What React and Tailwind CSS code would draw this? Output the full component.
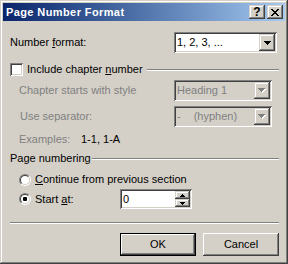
import React from "react";

const FRAME =
  "shadow-[inset_-1px_-1px_0_#404040,inset_1px_1px_0_#D4D0C8,inset_-2px_-2px_0_#808080,inset_2px_2px_0_#FFFFFF]";
const BUTTON =
  "shadow-[inset_-1px_-1px_0_#404040,inset_1px_1px_0_#FFFFFF,inset_-2px_-2px_0_#808080]";
const SUNKEN =
  "shadow-[inset_1px_1px_0_#808080,inset_-1px_-1px_0_#FFFFFF,inset_2px_2px_0_#404040,inset_-2px_-2px_0_#D4D0C8]";

function DownArrow({ disabled }) {
  if (disabled) {
    return (
      <svg width="8" height="5" viewBox="0 0 8 5" shapeRendering="crispEdges">
        <path d="M1 1h7v1H1zM2 2h5v1H2zM3 3h3v1H3zM4 4h1v1H4z" fill="#FFFFFF" />
        <path d="M0 0h7v1H0zM1 1h5v1H1zM2 2h3v1H2zM3 3h1v1H3z" fill="#808080" />
      </svg>
    );
  }
  return (
    <svg width="7" height="4" viewBox="0 0 7 4" shapeRendering="crispEdges">
      <path d="M0 0h7v1H0zM1 1h5v1H1zM2 2h3v1H2zM3 3h1v1H3z" fill="#000000" />
    </svg>
  );
}

function Combo({ className, disabled, children }) {
  return (
    <div
      className={`${className} h-[21px] p-[2px] flex ${SUNKEN} ${
        disabled ? "bg-[#D4D0C8] text-[#808080]" : "bg-white text-black"
      }`}
    >
      <div className="flex-1 flex items-center pl-[1px] whitespace-nowrap">{children}</div>
      <div className={`w-[16px] h-[17px] bg-[#D4D0C8] flex items-center justify-center ${FRAME}`}>
        <DownArrow disabled={disabled} />
      </div>
    </div>
  );
}

function Line({ className = "" }) {
  return <div className={`h-[2px] border-t border-t-[#808080] border-b border-b-white ${className}`} />;
}

function Radio({ checked }) {
  return (
    <div className="w-[12px] h-[12px] shrink-0 rounded-full border border-t-[#808080] border-l-[#808080] border-r-white border-b-white">
      <div className="w-full h-full rounded-full border border-t-[#404040] border-l-[#404040] border-r-[#D4D0C8] border-b-[#D4D0C8] bg-white flex items-center justify-center">
        {checked && <div className="w-[4px] h-[4px] rounded-[1px] bg-black" />}
      </div>
    </div>
  );
}

function PushButton({ isDefault, children }) {
  if (isDefault) {
    return (
      <div className="w-[76px] h-[23px] border border-black">
        <div className={`w-full h-full bg-[#D4D0C8] flex items-center justify-center ${BUTTON}`}>{children}</div>
      </div>
    );
  }
  return (
    <div className={`w-[76px] h-[23px] bg-[#D4D0C8] flex items-center justify-center ${BUTTON}`}>{children}</div>
  );
}

export default function App() {
  return (
    <div
      className={`w-[288px] h-[264px] bg-[#D4D0C8] p-[3px] flex flex-col font-['Liberation_Sans',Arial,sans-serif] text-[11px] leading-[13px] text-black select-none ${FRAME}`}
    >
      {/* Title bar */}
      <div className="h-[18px] shrink-0 flex items-center bg-linear-to-r from-[#0A246A] to-[#A6CAF0] pl-[3px] pr-[2px]">
        <span className="flex-1 font-bold text-white whitespace-nowrap tracking-[0.4px]">Page Number Format</span>
        <div className={`w-[16px] h-[14px] bg-[#D4D0C8] flex items-center justify-center ${FRAME}`}>
          <span className="font-bold text-[12px] leading-[12px] text-black">?</span>
        </div>
        <div className={`ml-[2px] w-[16px] h-[14px] bg-[#D4D0C8] flex items-center justify-center ${FRAME}`}>
          <svg width="8" height="7" viewBox="0 0 8 7" shapeRendering="crispEdges">
            <path
              d="M0 0h2v1H0zM6 0h2v1H6zM1 1h2v1H1zM5 1h2v1H5zM2 2h4v1H2zM3 3h2v1H3zM2 4h4v1H2zM1 5h2v1H1zM5 5h2v1H5zM0 6h2v1H0zM6 6h2v1H6z"
              fill="#000000"
            />
          </svg>
        </div>
      </div>

      {/* Client area */}
      <div className="flex flex-col pl-[7px] pr-[6px]">
        {/* Number format */}
        <div className="mt-[11px] h-[21px] flex items-center">
          <span className="w-[164px] whitespace-nowrap">
            Number <span className="underline">f</span>ormat:
          </span>
          <Combo className="w-[103px]">1, 2, 3, ...</Combo>
        </div>

        {/* Include chapter number */}
        <div className="mt-[10px] h-[13px] flex items-center">
          <div className={`w-[13px] h-[13px] shrink-0 bg-white ${SUNKEN}`} />
          <span className="ml-[4px] w-[120px] whitespace-nowrap">
            Include chapter <span className="underline">n</span>umber
          </span>
          <Line className="flex-1" />
        </div>

        {/* Chapter starts with style */}
        <div className="mt-[4px] h-[21px] flex items-center">
          <span className="w-[164px] pl-[9px] text-[#808080] whitespace-nowrap">Chapter starts with style</span>
          <Combo className="w-[98px]" disabled>
            Heading 1
          </Combo>
        </div>

        {/* Use separator */}
        <div className="mt-[5px] h-[21px] flex items-center">
          <span className="w-[164px] pl-[10px] text-[#808080] whitespace-nowrap">Use separator:</span>
          <Combo className="w-[98px]" disabled>
            <span>-</span>
            <span className="ml-[13px]">(hyphen)</span>
          </Combo>
        </div>

        {/* Examples */}
        <div className="mt-[6px] h-[13px] flex items-center pl-[9px]">
          <span className="w-[62px] text-[#808080]">Examples:</span>
          <span>1-1, 1-A</span>
        </div>

        {/* Page numbering group */}
        <div className="mt-[6px] h-[13px] flex items-center">
          <span className="w-[82px] whitespace-nowrap">Page numbering</span>
          <Line className="flex-1" />
        </div>

        <div className="mt-[8px] h-[13px] flex items-center pl-[9px]">
          <Radio />
          <span className="ml-[4px] whitespace-nowrap">
            <span className="underline">C</span>ontinue from previous section
          </span>
        </div>

        <div className="mt-[3px] h-[20px] flex items-center">
          <div className="w-[110px] flex items-center pl-[9px]">
            <Radio checked />
            <span className="ml-[4px] whitespace-nowrap">
              Start <span className="underline">a</span>t:
            </span>
          </div>
          <div className={`w-[72px] h-[20px] p-[2px] flex bg-white ${SUNKEN}`}>
            <span className="flex-1 flex items-center pl-[1px]">0</span>
            <div className="w-[15px] flex flex-col">
              <div className={`h-[8px] bg-[#D4D0C8] flex items-center justify-center ${FRAME}`}>
                <svg width="5" height="3" viewBox="0 0 5 3" shapeRendering="crispEdges">
                  <path d="M2 0h1v1H2zM1 1h3v1H1zM0 2h5v1H0z" fill="#000000" />
                </svg>
              </div>
              <div className={`h-[8px] bg-[#D4D0C8] flex items-center justify-center ${FRAME}`}>
                <svg width="5" height="3" viewBox="0 0 5 3" shapeRendering="crispEdges">
                  <path d="M0 0h5v1H0zM1 1h3v1H1zM2 2h1v1H2z" fill="#000000" />
                </svg>
              </div>
            </div>
          </div>
        </div>

        <Line className="mt-[13px]" />

        <div className="mt-[9px] flex justify-end gap-[7px]">
          <PushButton isDefault>OK</PushButton>
          <PushButton>Cancel</PushButton>
        </div>
      </div>
    </div>
  );
}
